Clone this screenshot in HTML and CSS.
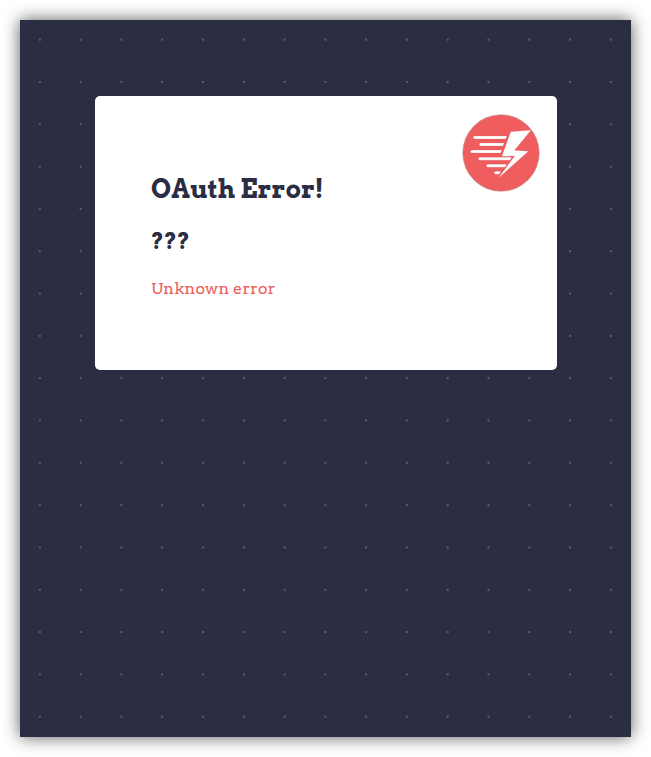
FILE: index.html
```html
<!DOCTYPE html>
<html lang="en">
<head>
<meta charset="utf-8">
<title>OAuth Error</title>
<link rel="stylesheet" href="styles.css">
</head>
<body>
<main class="page">
  <section class="card">
    <svg class="logo" viewBox="0 0 78 78" aria-hidden="true">
      <circle cx="39" cy="39" r="38.3" fill="#f05d5e" stroke="#b99c9c" stroke-width=".5"/>
      <g stroke="#b95a5d" stroke-width=".2" fill="#fff">
        <path d="M12.8 22H45l-1.3 3.1H12.8a1.5 1.5 0 0 1 0-3.1Z"/>
        <path d="M18.8 29H42.2l-1.1 3.1H18.8a1.5 1.5 0 0 1 0-3.1Z"/>
        <path d="M10.1 36H39.8l-1.2 3.1H10.1a1.5 1.5 0 0 1 0-3.1Z"/>
        <path d="M18 43.2H50l-2 3.1H18a1.5 1.5 0 0 1 0-3.1Z"/>
        <path d="M26 50.2H44.8l-1.8 3.1H26a1.5 1.5 0 0 1 0-3.1Z"/>
        <path d="M33.8 57.2H39l-1.8 3.1H33.8a1.5 1.5 0 0 1 0-3.1Z"/>
        <path d="M48.7 17.8 69.2 16 52.5 36.2 66.5 37.2 36 64.6 52.6 42 39.8 42.2Z"/>
      </g>
    </svg>
    <h1 class="title">OAuth Error!</h1>
    <h2 class="code">???</h2>
    <p class="message">Unknown error</p>
  </section>
</main>
</body>
</html>
```
FILE: styles.css
```css
* { box-sizing: border-box; }

body {
  margin: 0;
  padding: 20px;
  height: 757px;
  background: #fff;
  font-family: Arvo, "DejaVu Serif", serif;
  letter-spacing: .25px;
}

.page {
  height: 717px;
  padding: 76px 74px 0 75px;
  background-color: #2b2d42;
  background-image: radial-gradient(circle at center, #5c5d6e 1.2px, transparent 1.2px);
  background-size: 40px 40px;
  background-repeat: space;
  box-shadow: 0 0 16px rgba(0, 0, 0, .65);
}

.card {
  position: relative;
  height: 274px;
  padding: 76px 56px 0;
  background: #fff;
  border-radius: 5px;
  color: #2b2d42;
}

.logo {
  position: absolute;
  top: 18px;
  right: 17px;
  width: 78px;
  height: 78px;
}

.title {
  margin: 0;
  font-size: 25.6px;
  line-height: 34px;
  letter-spacing: .06px;
  white-space: nowrap;
}

.code {
  margin: 20px 0 0;
  font-size: 22.4px;
  line-height: 30px;
  letter-spacing: 0;
}

.message {
  margin: 21px 0 0;
  font-size: 16px;
  line-height: 24px;
  color: #f05d5e;
}
```
